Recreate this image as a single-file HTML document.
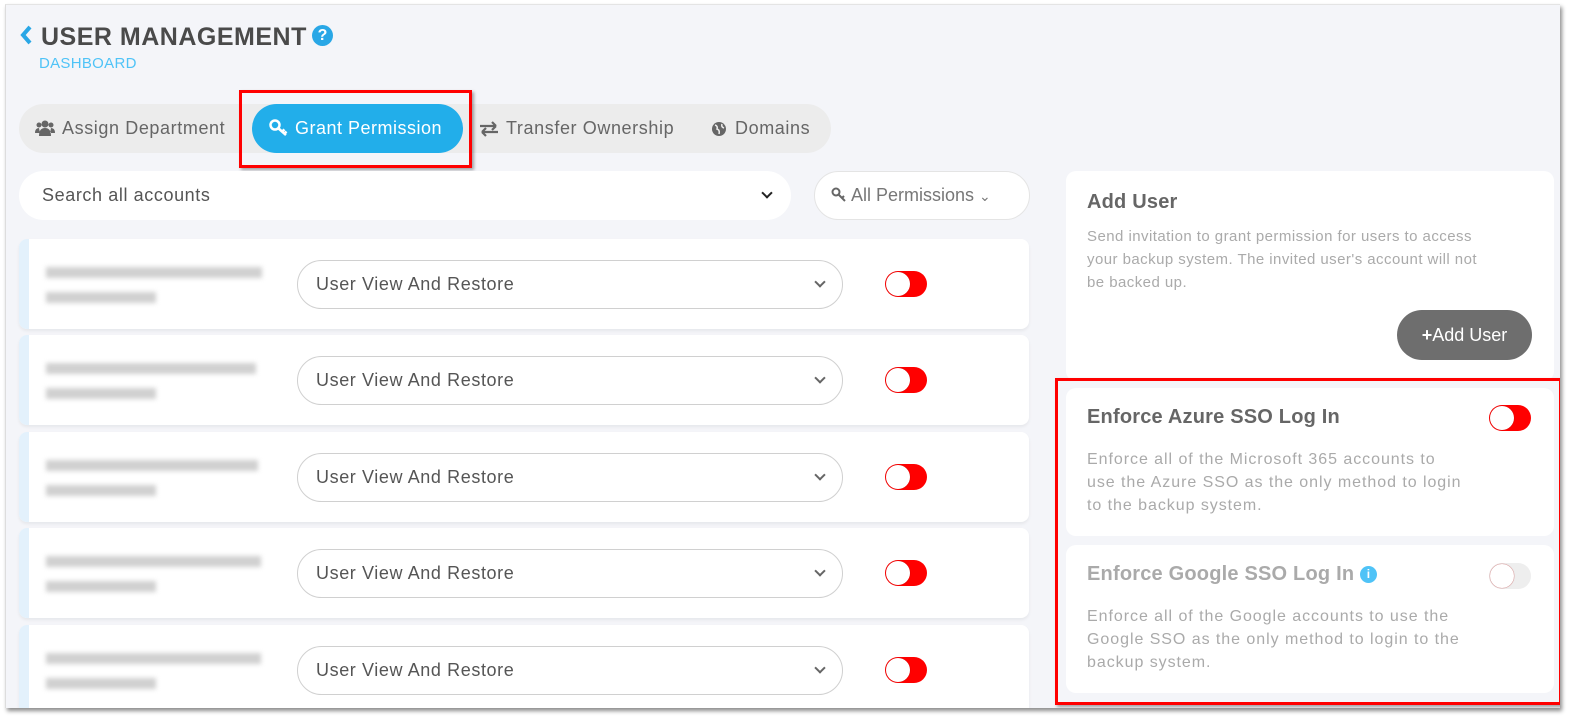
<!DOCTYPE html>
<html><head><meta charset="utf-8"><style>
*{box-sizing:border-box;margin:0;padding:0}
body{width:1577px;height:719px;background:#fff;font-family:"Liberation Sans",sans-serif;position:relative;overflow:hidden}
.frame{position:absolute;left:5px;top:4px;width:1555px;height:704px;background:#f4f5f9;box-shadow:2px 3px 4px rgba(0,0,0,.45);overflow:hidden;border-left:1px solid #ddd;border-top:1px solid #e4e4e4}
.a{position:absolute}
.title{left:35px;top:18px;font-size:25px;font-weight:bold;color:#4a4a4a;letter-spacing:.5px}
.dash{left:33px;top:50px;font-size:15px;color:#4fc3f7;letter-spacing:.3px}
.tabs{left:13px;top:99px;width:812px;height:49px;background:#ececec;border-radius:25px}
.tab{position:absolute;top:0;height:49px;line-height:49px;font-size:18px;color:#666;letter-spacing:.6px}
.grant{left:246px;top:99px;width:211px;height:49px;border-radius:25px;background:#22aeea;color:#fff;font-size:18px;line-height:49px;padding-left:43px;letter-spacing:.5px}
.redbox{border:3px solid #f00;box-shadow:2px 2px 3px rgba(0,0,0,.35)}
.search{left:13px;top:166px;width:772px;height:49px;background:#fff;border-radius:25px;font-size:18px;color:#555;line-height:49px;padding-left:23px;letter-spacing:.6px}
.perm{left:808px;top:166px;width:216px;height:49px;background:#fff;border:1px solid #e4e4e4;border-radius:25px;font-size:18px;color:#777;line-height:47px;padding-left:16px}
.row{position:absolute;left:13px;width:1010px;height:90px;background:#fff;border-radius:8px;box-shadow:0 2px 3px rgba(0,0,0,.06);overflow:hidden}
.row .strip{position:absolute;left:0;top:0;width:10px;height:100%;background:#e3f1fc}
.blur{position:absolute;background:#aaa;filter:blur(2.5px);opacity:.55;height:11px}
.dd{position:absolute;left:278px;top:21px;width:546px;height:49px;border:1px solid #d0d0d0;border-radius:25px;font-size:18px;color:#555;line-height:47px;padding-left:18px;letter-spacing:.6px}
.chev{position:absolute;right:18px;top:17px;width:8px;height:8px;border-right:2px solid #666;border-bottom:2px solid #666;transform:rotate(45deg)}
.tg{position:absolute;width:42px;height:26px;border-radius:13px;background:#f00}
.tg::after{content:"";position:absolute;left:1px;top:1px;width:24px;height:24px;border-radius:50%;background:#fff;box-shadow:0 0 1px #a00}
.card{position:absolute;background:#fff;border-radius:10px;left:1060px;width:488px}
.h{font-size:20px;font-weight:bold;color:#666;letter-spacing:.2px}
.p{font-size:15px;color:#aaa;line-height:23px;letter-spacing:.45px}
.p2{font-size:16px;color:#aaa;line-height:23px;letter-spacing:.95px}
</style></head><body>
<div class="frame">
<svg class="a" style="left:13px;top:19px" width="14" height="22"><path d="M11 3 L4 11 L11 19" stroke="#29a7e6" stroke-width="4" fill="none"/></svg>
<div class="a title">USER MANAGEMENT</div>
<div class="a" style="left:306px;top:20px;width:21px;height:21px;border-radius:50%;background:#29a7e6;color:#fff;font-weight:bold;font-size:16px;text-align:center;line-height:21px">?</div>
<div class="a dash">DASHBOARD</div>
<div class="a tabs">
<svg class="a" style="left:16px;top:15px" width="20" height="18"><circle cx="10" cy="5" r="3.5" fill="#666"/><circle cx="4" cy="6" r="2.5" fill="#666"/><circle cx="16" cy="6" r="2.5" fill="#666"/><path d="M4 17 Q4 9 10 9 Q16 9 16 17Z M0 14 Q0 9 4 9 L5 14Z M20 14 Q20 9 16 9 L15 14Z" fill="#666"/></svg>
<div class="tab" style="left:43px">Assign Department</div>
<svg class="a" style="left:460px;top:17px" width="20" height="16"><path d="M1 5 H17 M13 1 L17 5 M19 11 H3 M7 7 L3 11 M7 15 L3 11 M13 9 L17 5" stroke="#666" stroke-width="2.2" fill="none"/></svg>
<div class="tab" style="left:487px">Transfer Ownership</div>
<svg class="a" style="left:692px;top:17px" width="16" height="16"><circle cx="8" cy="8" r="7" fill="#666"/><path d="M4 4 Q7 5 6 8 Q9 9 8 13 M11 3 Q10 6 13 7" stroke="#ececec" stroke-width="1.5" fill="none"/></svg>
<div class="tab" style="left:716px">Domains</div>
</div>
<div class="a grant">Grant Permission</div>
<svg class="a" style="left:263px;top:114px" width="20" height="18"><circle cx="6" cy="6" r="4.5" stroke="#fff" stroke-width="2.5" fill="none"/><path d="M9 9 L17 16 M13 12.5 L15.5 10.5 M15.5 14.5 L17.5 12.5" stroke="#fff" stroke-width="2.5"/></svg>
<div class="a redbox" style="left:233px;top:85px;width:233px;height:78px"></div>
<div class="a search">Search all accounts<div class="chev" style="right:20px;top:18px;border-color:#222"></div></div>
<div class="a perm"><svg width="16" height="16" style="vertical-align:-2px"><circle cx="5" cy="5" r="3.5" stroke="#666" stroke-width="2" fill="none"/><path d="M7.5 7.5 L14 14 M11 11 L13 9" stroke="#666" stroke-width="2"/></svg> All Permissions <span style="font-size:14px">&#8964;</span></div>

<div class="row" style="top:234px"><div class="strip"></div><div class="blur" style="left:27px;top:28px;width:216px"></div><div class="blur" style="left:27px;top:53px;width:110px"></div><div class="dd">User View And Restore<div class="chev"></div></div><div class="tg" style="left:866px;top:32px"></div></div>
<div class="row" style="top:330px"><div class="strip"></div><div class="blur" style="left:27px;top:28px;width:210px"></div><div class="blur" style="left:27px;top:53px;width:110px"></div><div class="dd">User View And Restore<div class="chev"></div></div><div class="tg" style="left:866px;top:32px"></div></div>
<div class="row" style="top:427px"><div class="strip"></div><div class="blur" style="left:27px;top:28px;width:212px"></div><div class="blur" style="left:27px;top:53px;width:110px"></div><div class="dd">User View And Restore<div class="chev"></div></div><div class="tg" style="left:866px;top:32px"></div></div>
<div class="row" style="top:523px"><div class="strip"></div><div class="blur" style="left:27px;top:28px;width:215px"></div><div class="blur" style="left:27px;top:53px;width:110px"></div><div class="dd">User View And Restore<div class="chev"></div></div><div class="tg" style="left:866px;top:32px"></div></div>
<div class="row" style="top:620px"><div class="strip"></div><div class="blur" style="left:27px;top:28px;width:215px"></div><div class="blur" style="left:27px;top:53px;width:110px"></div><div class="dd">User View And Restore<div class="chev"></div></div><div class="tg" style="left:866px;top:32px"></div></div>

<div class="card" style="top:166px;height:210px">
<div class="h a" style="left:21px;top:20px">Add User</div>
<div class="p a" style="left:21px;top:54px;width:440px">Send invitation to grant permission for users to access<br>your backup system. The invited user's account will not<br>be backed up.</div>
<div class="a" style="left:331px;top:139px;width:135px;height:50px;border-radius:25px;background:#6e6e6e;color:#fff;font-size:18px;line-height:50px;text-align:center"><b>+</b>Add User</div>
</div>
<div class="card" style="top:383px;height:148px">
<div class="h a" style="left:21px;top:18px">Enforce Azure SSO Log In</div>
<div class="tg" style="left:423px;top:17px"></div>
<div class="p2 a" style="left:21px;top:60px;width:375px">Enforce all of the Microsoft 365 accounts to use the Azure SSO as the only method to login to the backup system.</div>
</div>
<div class="card" style="top:540px;height:148px">
<div class="h a" style="left:21px;top:18px;color:#aaa">Enforce Google SSO Log In <span style="display:inline-block;width:17px;height:17px;border-radius:50%;background:#4fc3f7;color:#fff;font-size:12px;text-align:center;line-height:17px;vertical-align:2px">i</span></div>
<div class="tg" style="left:423px;top:18px;background:#eee"></div>
<div class="p2 a" style="left:21px;top:60px;width:375px">Enforce all of the Google accounts to use the Google SSO as the only method to login to the backup system.</div>
</div>
<div class="a redbox" style="left:1049px;top:373px;width:507px;height:327px"></div>
</div>
</body></html>
